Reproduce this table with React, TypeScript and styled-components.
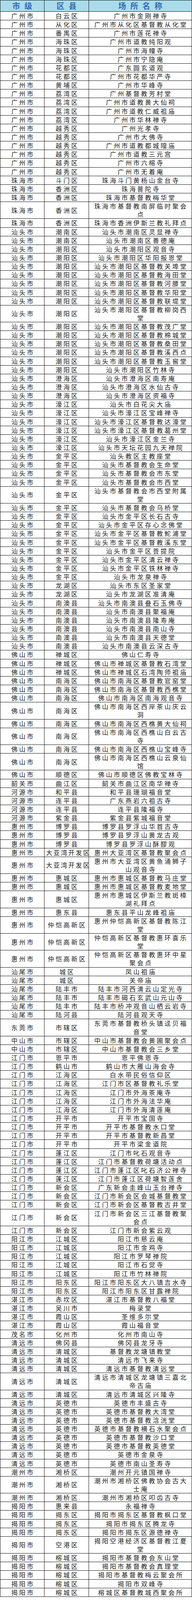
import styled, { createGlobalStyle } from "styled-components";

const GlobalStyle = createGlobalStyle`
  html, body {
    margin: 0;
    padding: 0;
    background: #ffffff;
  }
  body {
    font-family: "Noto Sans CJK SC", "Noto Sans", sans-serif;
  }
`;

const Table = styled.table`
  width: 491px;
  table-layout: fixed;
  border-collapse: collapse;
  font-family: "Noto Sans CJK SC", "Noto Sans", sans-serif;
`;

const Col = styled.col<{ $w: number }>`
  width: ${(p) => p.$w}px;
`;

const HeadCell = styled.th`
  height: 28px;
  padding: 0 0 0 11px;
  line-height: 28px;
  border: 1px solid #111;
  background: #a9dcea;
  color: #2e6cb6;
  font-size: 20px;
  font-weight: 700;
  letter-spacing: 11px;
  text-align: center;
`;

const Cell = styled.td<{ $wide?: boolean; $tight?: boolean }>`
  padding: ${(p) => (p.$wide ? "0 2px 0 6px" : "0 0 0 4px")};
  border: 1px solid #111;
  line-height: 21.14px;
  font-size: 16px;
  font-weight: 400;
  color: #1c1c1c;
  letter-spacing: ${(p) => (p.$tight ? "3px" : "4px")};
  white-space: ${(p) => (p.$tight ? "nowrap" : "normal")};
  text-align: center;
  vertical-align: middle;
`;

const raw = `广州市|白云区|广州市金刚禅寺
广州市|从化区|广州市从化区基督教从化堂
广州市|番禺区|广州市莲花禅寺
广州市|海珠区|广州市道教纯阳观
广州市|海珠区|广州市海幢寺
广州市|海珠区|广州市宁隐庵
广州市|花都区|广东圆玄道观
广州市|花都区|广州市花都华严寺
广州市|黄埔区|广州市华峰寺
广州市|荔湾区|广州基督教芳村堂
广州市|荔湾区|广州市道教黄大仙祠
广州市|荔湾区|广州市道教仁威祖庙
广州市|荔湾区|广州市华林禅寺
广州市|越秀区|广州光孝寺
广州市|越秀区|广州市大佛寺
广州市|越秀区|广州市道教都城隍庙
广州市|越秀区|广州市道教三元宫
广州市|越秀区|广州市六榕寺
广州市|越秀区|广州市无着庵
珠海市|斗门区|珠海斗门黄杨山金台寺
珠海市|香洲区|珠海普陀寺
珠海市|香洲区|珠海市基督教梅华堂
珠海市|香洲区|珠海市基督教南屏临时聚会点
珠海市|香洲区|珠海市香洲伊斯兰教礼拜点
汕头市|潮南区|汕头市潮南区灵显禅寺
汕头市|潮南区|汕头市潮南区善德庵
汕头市|潮阳区|汕头市潮阳区观音寺
汕头市|潮阳区|汕头市潮阳区华阳报恩堂
汕头市|潮阳区|汕头市潮阳区基督教关埠堂
汕头市|潮阳区|汕头市潮阳区基督教海田堂
汕头市|潮阳区|汕头市潮阳区基督教河腰堂
汕头市|潮阳区|汕头市潮阳区基督教华阳堂
汕头市|潮阳区|汕头市潮阳区基督教联堤堂
汕头市|潮阳区|汕头市潮阳区基督教柳岗西堂
汕头市|潮阳区|汕头市潮阳区基督教茂广堂
汕头市|潮阳区|汕头市潮阳区基督教棉城堂
汕头市|潮阳区|汕头市潮阳区基督教桑田堂
汕头市|潮阳区|汕头市潮阳区基督教溪西点
汕头市|潮阳区|汕头市潮阳区基督教玉窖堂
汕头市|潮阳区|汕头市潮阳区竹林寺
汕头市|澄海区|汕头市澄海区南寿庵
汕头市|澄海区|汕头市澄海区水仙古寺
汕头市|澄海区|汕头市澄海区资福寺
汕头市|濠江区|汕头市白花尖大庙
汕头市|濠江区|汕头市濠江区宝峰禅寺
汕头市|濠江区|汕头市濠江区基督教达濠堂
汕头市|濠江区|汕头市濠江区基督教葛州堂
汕头市|濠江区|汕头市濠江区金兰寺
汕头市|濠江区|汕头市天坛花园九天禅院
汕头市|金平区|汕头教区主教座堂
汕头市|金平区|汕头市基督教会生命堂
汕头市|金平区|汕头市基督教会市东堂
汕头市|金平区|汕头市基督教会市西堂
汕头市|金平区|汕头市基督教会市西堂附属堂
汕头市|金平区|汕头市基督教会乌桥堂
汕头市|金平区|汕头市金平区长石古寺
汕头市|金平区|汕头市金平区存心念佛堂
汕头市|金平区|汕头市金平区基督教鮀浦堂
汕头市|金平区|汕头市金平区基督教溪东堂
汕头市|金平区|汕头市金平区菩提院
汕头市|金平区|汕头市金平区清云禅寺
汕头市|金平区|汕头市金平区铁林禅寺
汕头市|金平区|汕头市龙泉禅寺
汕头市|龙湖区|汕头市东区圣家堂
汕头市|龙湖区|汕头市龙湖区准清庵
汕头市|南澳县|汕头市南澳县叠石玉佛寺
汕头市|南澳县|汕头市南澳县聚福庵
汕头市|南澳县|汕头市南澳县隆寿庵
汕头市|南澳县|汕头市南澳县南山寺
汕头市|南澳县|汕头市南澳县天德堂
汕头市|南澳县|汕头市南澳县云深古寺
佛山市|禅城区|佛山仁寿寺
佛山市|禅城区|佛山市禅城区基督教石湾堂
佛山市|禅城区|佛山市禅城区石湾陶师祖庙
佛山市|南海区|佛山市南海区基督教官窑堂
佛山市|南海区|佛山市南海区基督教西樵堂
佛山市|南海区|佛山市南海区南海观音寺
佛山市|南海区|佛山市南海区西岸茶山庆云洞
佛山市|南海区|佛山市南海区西樵黄大仙祠
佛山市|南海区|佛山市南海区西樵山白云古寺
佛山市|南海区|佛山市南海区西樵山宝峰寺
佛山市|南海区|佛山市南海区西樵山云泉仙馆
佛山市|顺德区|佛山市顺德区佛教宝林寺
韶关市|曲江区|韶关市曲江区南华禅寺
河源市|和平县|和平县珊瑚福音堂
河源市|连平县|广东燕岩六祖古寺
河源市|连平县|连平县隆福寺
河源市|紫金县|紫金县紫城福音堂
惠州市|博罗县|博罗县罗浮山华首古寺
惠州市|博罗县|博罗县罗浮山黄龙古观
惠州市|博罗县|博罗县罗浮山酥醪观
惠州市|大亚湾开发区|惠州大亚湾区基督教聚会点
惠州市|大亚湾开发区|惠州市大亚湾区黄鱼涌狮子山观音寺
惠州市|惠城区|惠州市惠城区基督教马庄堂
惠州市|惠城区|惠州市惠城区基督教麦地堂
惠州市|惠城区|惠州市惠城区伊斯兰教斑樟湖礼拜点
惠州市|惠东县|惠东县平山龙峰祖庙
惠州市|仲恺高新区|惠州仲恺高新区基督教陈江堂
惠州市|仲恺高新区|仲恺高新区基督教惠环喜乐堂
惠州市|仲恺高新区|仲恺高新区基督教惠环中星聚会点
汕尾市|城区|凤山祖庙
汕尾市|城区|关帝庙
汕尾市|陆丰市|陆丰市河西清云山定光寺
汕尾市|陆丰市|陆丰市碣石玄武山元山寺
汕尾市|陆丰市|陆丰市桥冲观音山栖云岩寺
汕尾市|陆河县|陆河县观天寺
东莞市|市辖区|东莞市基督教桥头镇迳贝福音堂
中山市|市辖区|中山市基督教会黄圃聚会点
中山市|市辖区|中山市基督教会三乡堂
江门市|恩平市|恩平佛恩寺
江门市|鹤山市|鹤山市大雁山海会寺
江门市|江海区|白水带民俗信仰区
江门市|江海区|江门市区基督教礼乐堂
江门市|江海区|江门市外海茶庵寺
江门市|江海区|江门市外海法华庵
江门市|江海区|江门市外海清莲庵
江门市|开平市|开平市宝国寺
江门市|开平市|开平市基督教水口堂
江门市|开平市|开平市基督教新昌堂
江门市|开平市|开平市梁金道院
江门市|蓬江区|江门市叱石观音寺
江门市|蓬江区|江门市基督教荷塘活动点
江门市|蓬江区|江门市蓬江区叱石济公禅寺
江门市|蓬江区|江门市蓬江区荷塘智莲舍
江门市|新会区|广东新会圭峰山玉台禅寺
江门市|新会区|江门市新会区会城基督教堂
江门市|新会区|江门市新会区基督教古井堂
江门市|新会区|江门市新会区三江基督教聚会点
江门市|新会区|江门市新会紫云观
阳江市|江城区|阳江市慈云庵
阳江市|江城区|阳江市金鸡寺
阳江市|江城区|阳江市罗琴禅院
阳江市|江城区|阳江市石觉寺
阳江市|江城区|阳江市竹林禅院
阳江市|阳东区|阳江市阳东区大八镇吉水寺
阳江市|阳东区|阳江市阳东区甘露禅院
湛江市|赤坎区|湛江市基督教八福堂
湛江市|吴川市|梅录堂
湛江市|霞山区|圣维多尔堂
湛江市|霞山区|霞山福音堂
茂名市|化州市|化州市南山寺
清远市|佛冈县|佛冈县龙牙寺
清远市|清城区|基督教龙塘镇教堂
清远市|清城区|清远市飞来寺
清远市|清城区|清远市基督教清远堂
清远市|清城区|清远市清城区龙塘镇三嘉北帝古庙
清远市|清城区|清远市清城区兴隆寺
清远市|英德市|英德市丰盛古寺
清远市|英德市|英德市基督教大湾堂
清远市|英德市|英德市基督教浛洸堂
清远市|英德市|英德市基督教横石水聚会点
清远市|英德市|英德市基督教沙口堂
清远市|英德市|英德市基督教英德堂
清远市|英德市|英德市金泉寺
清远市|英德市|英德市南山圣寿寺
潮州市|湘桥区|潮州开元镇国禅寺
潮州市|湘桥区|潮州市湘桥区佛教协会古大士庵
潮州市|湘桥区|潮州市湘桥区叩齿古寺
揭阳市|惠来县|永福禅寺
揭阳市|揭东区|揭阳市揭东区基督教枫口堂
揭阳市|揭东区|揭阳市揭东区腾龙寺
揭阳市|揭东区|揭阳市揭东区源德禅寺
揭阳市|空港区|揭阳空港经济区基督教江夏堂
揭阳市|榕城区|揭阳市基督教会东山堂
揭阳市|榕城区|揭阳市基督教会真理堂
揭阳市|榕城区|揭阳市基督教梅云聚会所
揭阳市|榕城区|揭阳市双峰寺
揭阳市|榕城区|榕城区基督教城西聚会所`;

const rows = raw.split("\n").map((l) => l.split("|") as [string, string, string]);

export default function App() {
  return (
    <>
      <GlobalStyle />
      <Table>
        <colgroup>
          <Col $w={113} />
          <Col $w={114} />
          <Col $w={264} />
        </colgroup>
        <thead>
          <tr>
            <HeadCell>市级</HeadCell>
            <HeadCell>区县</HeadCell>
            <HeadCell>场所名称</HeadCell>
          </tr>
        </thead>
        <tbody>
          {rows.map(([city, district, name], i) => (
            <tr key={i}>
              <Cell>{city}</Cell>
              <Cell $tight={district.length > 5}>{district}</Cell>
              <Cell $wide>{name}</Cell>
            </tr>
          ))}
        </tbody>
      </Table>
    </>
  );
}
